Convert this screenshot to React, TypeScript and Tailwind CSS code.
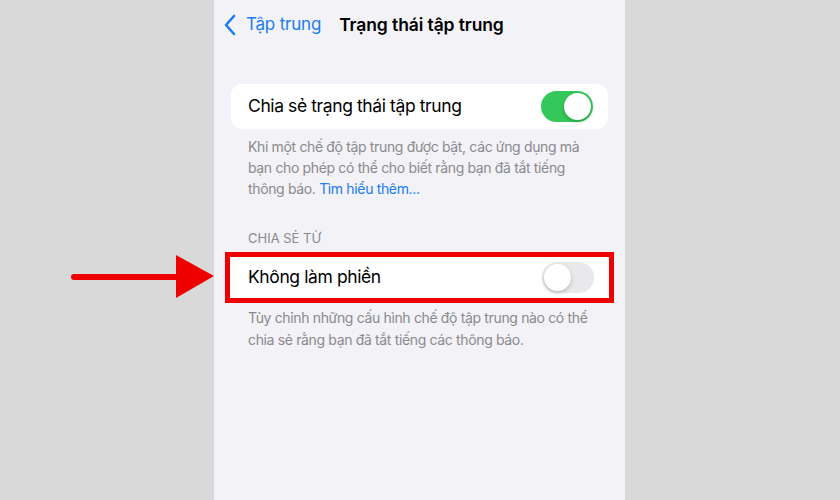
import React from 'react';

const Toggle: React.FC<{ on: boolean }> = ({ on }) => (
  <div
    className={`w-[52px] h-[31px] rounded-full p-[2px] flex ${
      on ? 'bg-[#34c759] justify-end' : 'bg-[#e9e9eb] justify-start'
    }`}
  >
    <div className="w-[27px] h-[27px] rounded-full bg-white shadow-[0_2px_4px_rgba(0,0,0,0.2)]" />
  </div>
);

const App: React.FC = () => {
  return (
    <div
      className="w-[840px] h-[500px] bg-[#d9d9d9] flex relative overflow-hidden"
      style={{ fontFamily: 'Inter, "Noto Sans", sans-serif' }}
    >
      {/* Left gray area */}
      <div className="w-[214px] shrink-0" />

      {/* Phone screen */}
      <div className="w-[411px] shrink-0 bg-[#f2f2f7] flex flex-col">
        {/* Nav bar */}
        <div className="h-[48px] flex items-center pl-[9px] pt-[2px]">
          <svg width="14" height="22" viewBox="0 0 14 22" className="mr-[9px]">
            <path d="M11 2 L3 11 L11 20" fill="none" stroke="#1a7cf0" strokeWidth="2.6" strokeLinecap="round" strokeLinejoin="round" />
          </svg>
          <span className="text-[17px] text-[#1a7cf0] tracking-[-0.2px]">Tập trung</span>
          <span className="ml-[18px] text-[17.5px] font-semibold text-black tracking-[-0.1px]">Trạng thái tập trung</span>
        </div>

        {/* Section 1 */}
        <div className="mt-[36px] mx-[17px] h-[45px] bg-white rounded-[11px] flex items-center justify-between pl-[17px] pr-[15px]">
          <span className="text-[17.5px] text-black tracking-[-0.4px]">Chia sẻ trạng thái tập trung</span>
          <Toggle on />
        </div>
        <p className="mt-[7px] mx-[34px] text-[14px] leading-[21px] text-[#8a8a8e] tracking-[-0.35px]">
          Khi một chế độ tập trung được bật, các ứng dụng mà bạn cho phép có thể cho biết rằng bạn đã tắt tiếng
          thông báo. <span className="text-[#1a7cf0]">Tìm hiểu thêm...</span>
        </p>

        {/* Section 2 */}
        <div className="mt-[31px] mx-[34px] text-[13px] text-[#8a8a8e] leading-[16px]">CHIA SẺ TỪ</div>
        <div className="mt-[6px] mx-[11px] h-[51px] border-[5px] border-[#ee0000] bg-white flex items-center justify-between pl-[18px] pr-[15px]">
          <span className="text-[17.5px] text-black tracking-[-0.4px]">Không làm phiền</span>
          <Toggle on={false} />
        </div>
        <p className="mt-[4px] mx-[34px] text-[14px] leading-[22px] text-[#8a8a8e] tracking-[-0.35px]">
          Tùy chỉnh những cấu hình chế độ tập trung nào có thể chia sẻ rằng bạn đã tắt tiếng các thông báo.
        </p>
      </div>

      {/* Right gray area */}
      <div className="flex-1" />

      {/* Annotation arrow */}
      <svg className="absolute left-[68px] top-[252px]" width="150" height="48" viewBox="0 0 150 48">
        <line x1="6" y1="25" x2="112" y2="25" stroke="#ee0000" strokeWidth="6" strokeLinecap="round" />
        <polygon points="108,3 146,24 108,46" fill="#ee0000" />
      </svg>
    </div>
  );
};

export default App;
